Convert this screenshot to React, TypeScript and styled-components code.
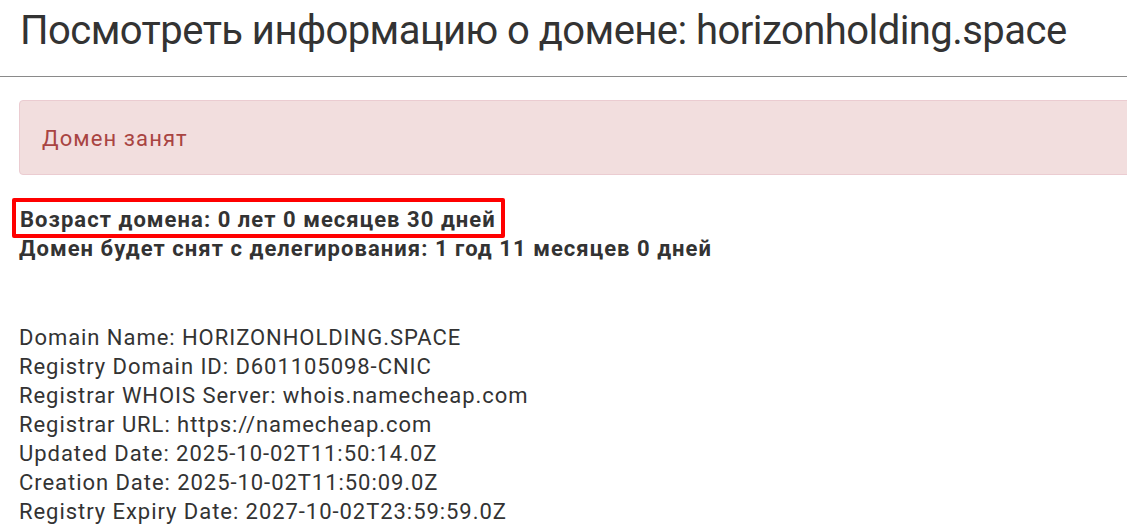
import React from 'react'
import styled, { createGlobalStyle } from 'styled-components'

const GlobalStyle = createGlobalStyle`
  html, body {
    margin: 0;
    padding: 0;
    background: #fff;
    overflow: hidden;
  }
  body {
    font-family: Roboto, "Noto Sans", Arial, sans-serif;
    color: #333;
  }
`

const Page = styled.div`
  width: 1127px;
  padding-top: 7px;
`

const Title = styled.h1`
  margin: 0 0 22px 20px;
  font-size: 40px;
  font-weight: 400;
  line-height: 47px;
  letter-spacing: -0.55px;
  color: #333;
  white-space: nowrap;
`

const Rule = styled.hr`
  margin: 0;
  border: 0;
  border-top: 1px solid #8a8a8a;
`

const Body = styled.div`
  padding: 23px 0 0 19px;
`

const Alert = styled.div`
  width: 1140px;
  box-sizing: border-box;
  padding: 23px 22px 21px;
  font-size: 22px;
  line-height: 29px;
  letter-spacing: 1.1px;
  color: #a94442;
  background: #f2dede;
  border: 1px solid #ebccd1;
  border-radius: 4px;
`

const Facts = styled.div`
  margin-top: 23px;
  font-size: 22px;
  font-weight: 700;
  line-height: 29px;
  letter-spacing: 1.05px;
  color: #333;
  white-space: nowrap;
`

const Highlight = styled.span`
  display: inline-block;
  margin-left: -7px;
  padding: 3px 5px 0 4px;
  line-height: 29px;
  border: 4px solid #f00;
  border-radius: 2px;
`

const Line = styled.div`
  margin-top: -4px;
`

const Whois = styled.pre`
  margin: 60px 0 0;
  font-family: Roboto, "Noto Sans", Arial, sans-serif;
  font-size: 22px;
  line-height: 29px;
  letter-spacing: 0.95px;
  color: #333;
`

const whoisLines = [
  'Domain Name: HORIZONHOLDING.SPACE',
  'Registry Domain ID: D601105098-CNIC',
  'Registrar WHOIS Server: whois.namecheap.com',
  'Registrar URL: https://namecheap.com',
  'Updated Date: 2025-10-02T11:50:14.0Z',
  'Creation Date: 2025-10-02T11:50:09.0Z',
  'Registry Expiry Date: 2027-10-02T23:59:59.0Z',
]

const App = () => {
  return (
    <Page>
      <GlobalStyle />
      <Title>Посмотреть информацию о домене: horizonholding.space</Title>
      <Rule />
      <Body>
        <Alert>Домен занят</Alert>
        <Facts>
          <Highlight>Возраст домена: 0 лет 0 месяцев 30 дней</Highlight>
          <Line>Домен будет снят с делегирования: 1 год 11 месяцев 0 дней</Line>
        </Facts>
        <Whois>{whoisLines.join('\n')}</Whois>
      </Body>
    </Page>
  )
}

export default App
